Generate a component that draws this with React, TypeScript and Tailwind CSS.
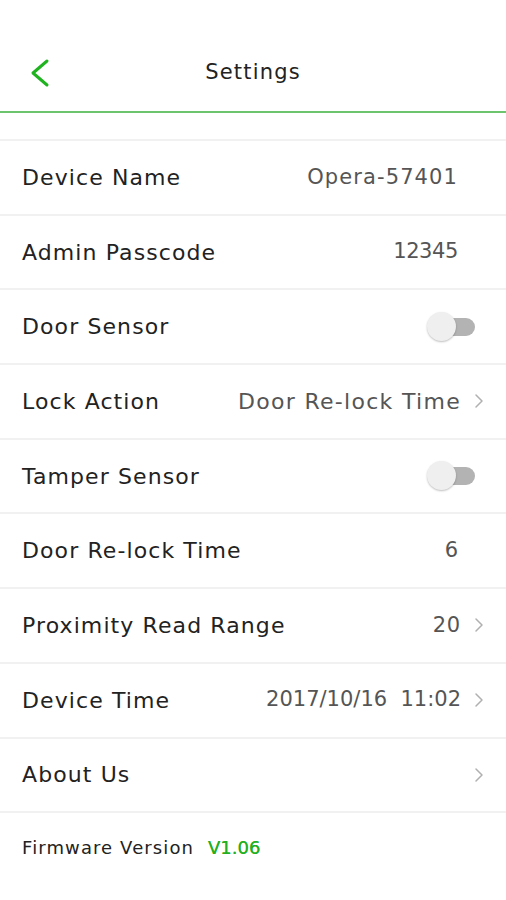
import { ChevronRight } from "lucide-react";

type Row = {
  label: string;
  value?: string;
  toggle?: boolean;
  arrow?: boolean;
  valueClass?: string;
};

const rows: Row[] = [
  { label: "Device Name", value: "Opera-57401", valueClass: "text-[21px] tracking-[1.1px]" },
  { label: "Admin Passcode", value: "12345", valueClass: "text-[21px] tracking-[-0.4px]" },
  { label: "Door Sensor", toggle: true },
  { label: "Lock Action", value: "Door Re-lock Time", arrow: true, valueClass: "text-[22px] tracking-[1.3px]" },
  { label: "Tamper Sensor", toggle: true },
  { label: "Door Re-lock Time", value: "6", valueClass: "text-[21px]" },
  { label: "Proximity Read Range", value: "20", arrow: true, valueClass: "text-[21px] tracking-[0.8px]" },
  { label: "Device Time", value: "2017/10/16  11:02", arrow: true, valueClass: "text-[21px] tracking-[0px]" },
  { label: "About Us", arrow: true },
];

const Toggle = () => (
  <div className="relative w-[48px] h-[30px] mr-[31px]">
    <div className="absolute right-0 top-[6px] w-[36px] h-[18px] rounded-full bg-[#b3b3b3]" />
    <div className="absolute left-0 top-0 w-[29px] h-[29px] rounded-full bg-[#efefef] shadow-[0_1px_2px_rgba(0,0,0,0.25)]" />
  </div>
);

const SettingRow = ({ row }: { row: Row }) => (
  <div className="flex items-center justify-between h-[74.7px] border-b-2 border-[#f1f1f1] pl-[22px]">
    <span className="text-[22px] tracking-[1.1px] text-[#222]">{row.label}</span>
    {row.toggle ? (
      <Toggle />
    ) : row.arrow ? (
      <div className="flex items-center pr-[15px]">
        {row.value && (
          <span className={`${row.valueClass} text-[#555] whitespace-pre`}>{row.value}</span>
        )}
        <ChevronRight className="w-[24px] h-[24px] text-[#b0b0b0] ml-[6px]" strokeWidth={1.5} />
      </div>
    ) : (
      <span className={`${row.valueClass} text-[#555] pr-[48px]`}>{row.value}</span>
    )}
  </div>
);

export default function App() {
  return (
    <div
      className="w-[506px] h-[900px] bg-white overflow-hidden"
      style={{ fontFamily: '"DejaVu Sans", "Noto Sans", sans-serif' }}
    >
      <div className="relative flex items-center justify-center h-[113px] border-b-2 border-[#6cc46c]">
        <svg
          className="absolute left-[29px] top-[58px] w-[22px] h-[30px]"
          viewBox="0 0 22 30"
          fill="none"
          stroke="#1fb31f"
          strokeWidth={3}
          strokeLinecap="round"
          strokeLinejoin="round"
        >
          <polyline points="18,3 4,15 18,27" />
        </svg>
        <span className="text-[21px] tracking-[1.2px] text-[#222] mt-[35px]">Settings</span>
      </div>
      <div className="h-[26px]" />
      <div className="border-t-2 border-[#f1f1f1]">
        {rows.map((r) => (
          <SettingRow key={r.label} row={r} />
        ))}
      </div>
      <div className="flex items-center h-[68px] pl-[22px] text-[18px]">
        <span className="text-[#222] tracking-[1.1px]">Firmware Version</span>
        <span className="ml-[14px] text-[#22b022] [text-shadow:0_0_0.4px_#22b022]">V1.06</span>
      </div>
    </div>
  );
}
